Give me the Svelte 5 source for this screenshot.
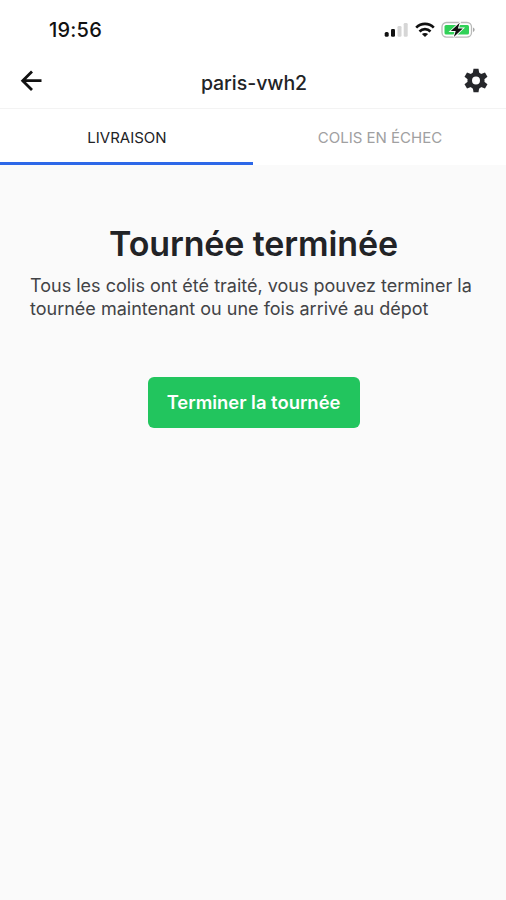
<script>
  let route = 'paris-vwh2'
  let tabs = ['Livraison', 'Colis en échec']
  let active = 0
  let teeth = [0, 60, 120, 180, 240, 300]
</script>

<div class="screen">
  <div class="status">
    <span class="time">19:56</span>
    <div class="indicators">
      <svg class="signal" width="25" height="16" viewBox="0 0 25 16">
        <rect x="0.7" y="10" width="4" height="4.7" rx="1.5" fill="#111" />
        <rect x="7" y="7" width="4" height="7.7" rx="1.3" fill="#111" />
        <rect x="13.5" y="4" width="4" height="10.7" rx="1.3" fill="#d6d6d6" />
        <rect x="19.7" y="1" width="4" height="13.7" rx="1.3" fill="#d6d6d6" />
      </svg>
      <svg class="wifi" width="20" height="16" viewBox="0 0 20 16" fill="none" stroke="#111" stroke-width="2.7">
        <path d="M1.2 5.6C6.3 .7 13.7 .7 18.8 5.6" />
        <path d="M4.5 9.4C7.7 6.4 12.3 6.4 15.5 9.4" />
        <path d="M10 15L6.9 12C8.7 10.5 11.3 10.5 13.1 12Z" fill="#111" stroke="none" />
      </svg>
      <svg class="battery" width="35" height="18" viewBox="0 0 35 18">
        <rect x="1" y="1.5" width="29.5" height="14.6" rx="4.5" fill="#fff" stroke="#b9bab9" stroke-width="1.3" />
        <rect x="3.5" y="4" width="24.5" height="9.6" rx="1.5" fill="#31d158" />
        <path d="M32 6.5C34.2 7.4 34.2 10 32 10.9Z" fill="#a8a8a8" />
        <path d="M18.7 1.8L9.8 10.1H14.7L12.8 16L21.8 7.5H16.9Z" fill="#111" stroke="#fff" stroke-width="1.8" paint-order="stroke" />
      </svg>
    </div>
  </div>

  <header>
    <button class="icon back" aria-label="Retour">
      <svg width="24" height="24" viewBox="0 0 24 24" fill="none" stroke="#111" stroke-width="2.8">
        <path d="M22.5 11.7H4M13 2.5L3.7 11.7L13 20.9" />
      </svg>
    </button>
    <h2>{route}</h2>
    <button class="icon settings" aria-label="Réglages">
      <svg width="26" height="26" viewBox="-13 -12.5 26 26">
        <g fill="#26272b">
          {#each teeth as angle}
            <path d="M-3.3 -7L-2.5 -11.8H2.5L3.3 -7Z" transform={`rotate(${angle})`} />
          {/each}
        </g>
        <circle r="6.3" fill="#fff" stroke="#26272b" stroke-width="4.6" />
      </svg>
    </button>
  </header>

  <nav>
    {#each tabs as tab, i}
      <button class="tab" class:active={active === i} on:click={() => (active = i)}>{tab}</button>
    {/each}
  </nav>

  <main>
    <h1>Tournée terminée</h1>
    <p>Tous les colis ont été traité, vous pouvez terminer la tournée maintenant ou une fois arrivé au dépot</p>
    <button class="finish">Terminer la tournée</button>
  </main>
</div>

<style>
  :global(body) {
    margin: 0;
    background: #fafafa;
  }

  .screen {
    min-height: 900px;
    background: #fafafa;
    color: #222326;
    font-family: Inter, 'Liberation Sans', sans-serif;
  }

  button {
    border: 0;
    padding: 0;
    background: none;
    font-family: inherit;
    cursor: pointer;
  }

  svg {
    display: block;
  }

  .status {
    display: flex;
    justify-content: space-between;
    align-items: center;
    height: 54px;
    padding: 6px 30px 0 49px;
    box-sizing: border-box;
    background: #fff;
  }

  .time {
    font-size: 20px;
    font-weight: 500;
    letter-spacing: 0.2px;
    color: #111;
  }

  .indicators {
    display: flex;
    align-items: center;
  }

  .wifi {
    margin-left: 6px;
  }

  .battery {
    margin-left: 6px;
  }

  header {
    display: grid;
    grid-template-columns: 60px 1fr 60px;
    align-items: center;
    height: 55px;
    box-sizing: border-box;
    border-bottom: 1px solid #f3f3f3;
    background: #fff;
  }

  .icon {
    display: flex;
    padding-bottom: 1px;
  }

  .back {
    padding-left: 19px;
  }

  .settings {
    padding-left: 17px;
  }

  h2 {
    margin: 4px 0 0;
    padding-left: 2px;
    text-align: center;
    font-size: 19.5px;
    font-weight: 500;
    letter-spacing: -0.05px;
  }

  nav {
    display: flex;
    height: 56px;
    background: #fff;
  }

  .tab {
    flex: 1;
    padding: 3px 0 0 1px;
    border-bottom: 3px solid transparent;
    font-size: 15px;
    text-transform: uppercase;
    color: #a0a0a1;
  }

  .tab.active {
    border-bottom-color: #2d68e8;
    color: #222326;
  }

  main {
    display: flex;
    flex-direction: column;
    align-items: center;
    padding: 58px 29px 0 30px;
  }

  h1 {
    margin: 0;
    font-size: 34px;
    line-height: 42px;
    font-weight: 600;
    letter-spacing: -0.12px;
  }

  p {
    margin: 10px 0 0;
    align-self: stretch;
    font-size: 18px;
    line-height: 22.5px;
    color: #424346;
  }

  .finish {
    margin-top: 57px;
    padding-bottom: 2px;
    width: 212px;
    height: 51px;
    border-radius: 6px;
    background: #22c55e;
    color: #fff;
    font-size: 18.4px;
    font-weight: 600;
  }
</style>
